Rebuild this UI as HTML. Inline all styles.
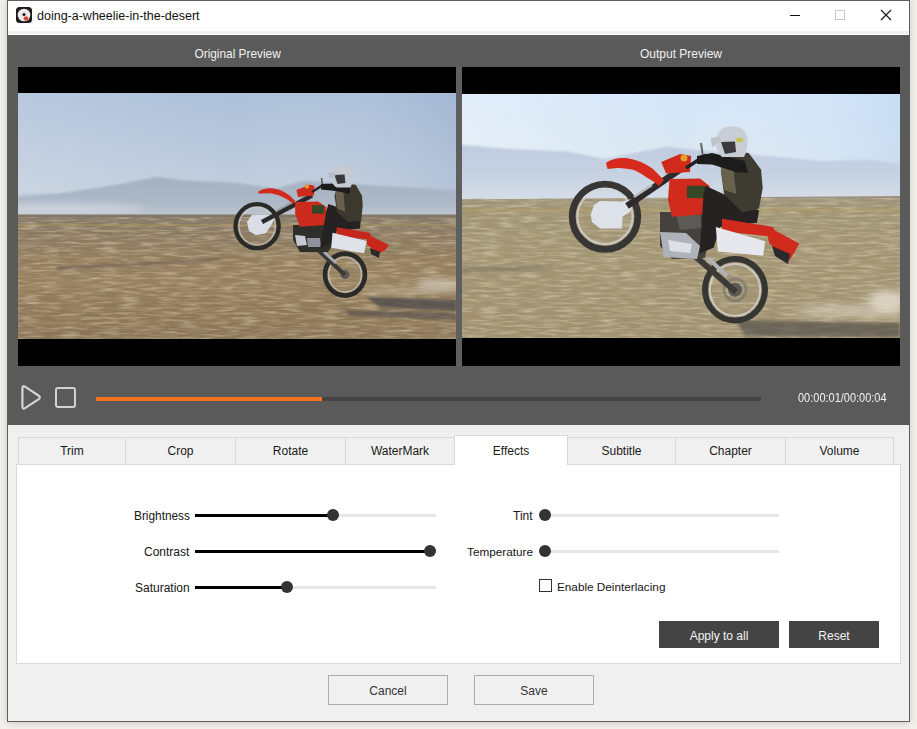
<!DOCTYPE html>
<html><head><meta charset="utf-8">
<style>
*{margin:0;padding:0;box-sizing:border-box}
html,body{width:917px;height:729px;overflow:hidden;background:#f1f0eb;font-family:"Liberation Sans",sans-serif}
.a{position:absolute}
.t{position:absolute;white-space:nowrap;line-height:1}
#win{left:7px;top:0;width:903px;height:722px;border:1px solid #5f5f5f;background:#f0f0f0;box-shadow:0 1px 7px rgba(0,0,0,0.16)}
#title{left:8px;top:1px;width:901px;height:34px;background:#fff}
#title .strip{left:0;top:30px;width:901px;height:3px;background:#efefef}
#dark{left:8px;top:35px;width:901px;height:390px;background:#5a5a5a}
.blk{background:#000}
.tab{position:absolute;top:437px;height:27px;background:#f0f0f0;border:1px solid #d9d9d9;border-bottom:none;font-size:12px;color:#1a1a1a;text-align:center;line-height:27px}
#panel{left:16px;top:464px;width:885px;height:200px;background:#fff;border:1px solid #d9d9d9}
.lbl{position:absolute;font-size:12px;color:#161616;line-height:1;white-space:nowrap}
.trk{position:absolute;height:3px;background:#e6e6e6}
.fill{position:absolute;height:3px;background:#000}
.knob{position:absolute;width:12px;height:12px;border-radius:50%;background:#333}
.dbtn{position:absolute;background:#444;color:#f4f4f4;font-size:12px;text-align:center;line-height:31px}
.lbtn{position:absolute;background:#f0f0f0;border:1px solid #adadad;color:#333;font-size:12px;text-align:center;line-height:31px}
</style></head><body>
<div id="win" class="a"></div>
<div id="title" class="a"><div class="a strip"></div></div>
<!-- app icon -->
<svg class="a" style="left:16px;top:7px" width="16" height="16" viewBox="0 0 16 16"><rect x="0" y="0" width="16" height="16" rx="3.5" fill="#1e1c1c"/><circle cx="8" cy="8" r="6.3" fill="#ebebec"/><ellipse cx="10.2" cy="11" rx="3" ry="2.6" fill="#f0c8b8" opacity="0.8"/><circle cx="10" cy="11.6" r="2.1" fill="#d8402a"/><circle cx="8" cy="7.4" r="1.5" fill="#151515"/></svg>
<div class="t" style="left:37px;top:10px;font-size:12.5px;color:#111">doing-a-wheelie-in-the-desert</div>
<!-- window controls -->
<div class="a" style="left:790px;top:15px;width:10px;height:1px;background:#111"></div>
<div class="a" style="left:835px;top:10px;width:10px;height:10px;border:1px solid #c8c8c8"></div>
<svg class="a" style="left:880px;top:9px" width="12" height="12" viewBox="0 0 12 12"><path d="M1 1L11 11M11 1L1 11" stroke="#111" stroke-width="1.1"/></svg>

<div id="dark" class="a"></div>
<div class="t" style="left:194.5px;top:48.6px;font-size:11.85px;color:#f0f0f0">Original Preview</div>
<div class="t" style="left:640px;top:48px;font-size:12px;color:#f0f0f0">Output Preview</div>
<div class="a blk" style="left:18px;top:67px;width:438px;height:299px"></div>
<div class="a blk" style="left:462px;top:67px;width:438px;height:299px"></div>
<div class="a" style="left:456px;top:67px;width:6px;height:299px;background:#5f5f5f"></div>
<svg class="a" style="left:18px;top:93px" width="438" height="246" viewBox="18 93 438 246">
<defs>
<linearGradient id="skyL" x1="0" y1="0" x2="0" y2="1"><stop offset="0" stop-color="#acc0d9"/><stop offset="0.7" stop-color="#bfccdc"/><stop offset="1" stop-color="#c8d1dc"/></linearGradient>
<linearGradient id="skyLh" x1="0" y1="0" x2="1" y2="0"><stop offset="0" stop-color="#ffffff" stop-opacity="0.14"/><stop offset="0.5" stop-color="#ffffff" stop-opacity="0"/><stop offset="1" stop-color="#7d98c0" stop-opacity="0.2"/></linearGradient>
<linearGradient id="mtnL" x1="0" y1="0" x2="0" y2="1"><stop offset="0" stop-color="#a5b1c2"/><stop offset="0.6" stop-color="#adb8c7"/><stop offset="1" stop-color="#c0c7d0"/></linearGradient>
<linearGradient id="gndL" x1="0" y1="0" x2="0" y2="1"><stop offset="0" stop-color="#80776a"/><stop offset="0.07" stop-color="#877965"/><stop offset="0.35" stop-color="#917c5d"/><stop offset="0.55" stop-color="#95805e"/><stop offset="0.75" stop-color="#8d7857"/><stop offset="1" stop-color="#897458"/></linearGradient>
<filter id="grainL" x="0" y="0" width="100%" height="100%">
<feTurbulence type="fractalNoise" baseFrequency="0.05 0.4" numOctaves="2" seed="7"/>
<feColorMatrix type="matrix" values="0 0 0 0 0.36  0 0 0 0 0.27  0 0 0 0 0.16  2.0 0 0 0 -0.82"/>
</filter>
<filter id="grainL2" x="0" y="0" width="100%" height="100%">
<feTurbulence type="fractalNoise" baseFrequency="0.05 0.4" numOctaves="2" seed="19"/>
<feColorMatrix type="matrix" values="0 0 0 0 0.74  0 0 0 0 0.64  0 0 0 0 0.46  1.8 0 0 0 -0.8"/>
</filter>
<filter id="soft" x="-10%" y="-10%" width="120%" height="120%"><feGaussianBlur stdDeviation="0.6"/></filter>
<filter id="blur3" x="-50%" y="-50%" width="200%" height="200%"><feGaussianBlur stdDeviation="3"/></filter>
<filter id="mblur" x="-5%" y="-20%" width="110%" height="140%"><feGaussianBlur stdDeviation="1.2"/></filter>
<filter id="blur1" x="-20%" y="-50%" width="140%" height="200%"><feGaussianBlur stdDeviation="1.3"/></filter>
</defs>
<rect x="18" y="93" width="438" height="122" fill="url(#skyL)"/>
<rect x="18" y="93" width="438" height="100" fill="url(#skyLh)"/>
<path d="M10 197 L54 194 L90 189 L126 183 L157 177 L186 180.6 L238 183 L276 188.5 L304 181 L340 183 L381 186 L420 188 L466 191 L466 218 L10 218 Z" fill="url(#mtnL)" filter="url(#mblur)"/>
<ellipse cx="50" cy="209" rx="95" ry="6" fill="#dfe3e8" opacity="0.5" filter="url(#blur3)"/>
<rect x="18" y="214.5" width="438" height="124.5" fill="url(#gndL)"/>
<rect x="18" y="217" width="438" height="122" filter="url(#grainL)" opacity="0.9"/>
<rect x="18" y="217" width="438" height="122" filter="url(#grainL2)" opacity="0.7"/>
<rect x="18" y="224" width="438" height="2" fill="#a8915c" opacity="0.5"/>
<path d="M56 267 Q140 263 220 257.5 L220 260 Q140 266 56 270 Z" fill="#544a4c" opacity="0.4" filter="url(#blur1)"/>
<path d="M366 297 L456 300 L456 311 L380 307 Z" fill="#4c4a4e" opacity="0.75" filter="url(#blur1)"/>
<path d="M346 310 L456 313 L456 320 L350 316 Z" fill="#524e4e" opacity="0.6" filter="url(#blur1)"/>
<ellipse cx="440" cy="285" rx="24" ry="7" fill="#d8cfc0" opacity="0.65" filter="url(#blur3)"/>
<ellipse cx="400" cy="291" rx="40" ry="3.5" fill="#cbbfa8" opacity="0.5" filter="url(#blur3)"/>
<g filter="url(#soft)">
<!-- front wheel -->
<ellipse cx="257.1" cy="226.2" rx="21.6" ry="22" fill="none" stroke="#2a2928" stroke-width="4.3"/>
<ellipse cx="257.1" cy="226.2" rx="18.2" ry="18.6" fill="none" stroke="#c9cbcc" stroke-width="1.3" opacity="0.75"/>
<path d="M252 214.8 L266 214.6 L276 215.5 L272 224 L266 233 L256 235.2 L249 231 L247 222 Z" fill="#d9dde5"/>
<!-- fork -->
<path d="M262 222 L312 195.6" stroke="#2c2b2a" stroke-width="4.5"/>
<path d="M276 211 L294 201" stroke="#9a9ca2" stroke-width="2"/>
<!-- rear wheel -->
<ellipse cx="345" cy="274.6" rx="20" ry="21" fill="none" stroke="#2a2928" stroke-width="4.6"/>
<ellipse cx="345" cy="274.6" rx="16.4" ry="17.3" fill="none" stroke="#c9cbcc" stroke-width="1.3" opacity="0.75"/>
<circle cx="345" cy="274.6" r="4.5" fill="#5a5856"/>
<path d="M318 250 L345 275" stroke="#3a3937" stroke-width="4"/>
<path d="M324 252 L336 263" stroke="#a9abb0" stroke-width="3"/>
<!-- front fender -->
<path d="M258 192 Q264 187.5 274 188.4 Q286 190 295.2 201 L292.8 203.4 Q284 196 272 193.5 Q264 193 259.2 193.8 Z" fill="#d02a1c"/>
<!-- engine -->
<path d="M293 225 L330 225 L336 240 L328 252 L300 252 L293 240 Z" fill="#2f2d2b"/>
<path d="M295 235 L305 236 L307 245 L297 246 Z" fill="#c6c9cf"/>
<path d="M307 238 L320 238 L321 247 L308 247 Z" fill="#8e939b"/>
<!-- shroud / tank -->
<path d="M295.2 202 L318 201.6 L326.4 207 L326.4 225 L300 226.8 L295.2 214 Z" fill="#cb291e"/>
<path d="M312 205.2 L324 205.2 L324 213.6 L312 213.6 Z" fill="#344726"/>
<!-- number plate -->
<path d="M296.4 190 L310 184.8 L314.4 186 L314 195.6 L298 197 Z" fill="#cc2a1f"/>
<circle cx="307" cy="186.5" r="2.2" fill="#e2962c"/>
<!-- handlebar -->
<path d="M312 192 L323 185" stroke="#242424" stroke-width="2.5"/>
<path d="M321.5 178 L322.5 186" stroke="#555" stroke-width="1.5"/>
<!-- pants -->
<path d="M328.4 204 L361.3 214.9 L360 228.6 L336.6 231.3 L332.5 243.7 L320.2 247.8 L323 231.3 L326 212 Z" fill="#252423"/>
<!-- jacket -->
<path d="M338 183 L355.8 184.7 L362 195.7 L362.7 205.3 L361.3 220.4 L348 222 L337 212 L334.5 196 Z" fill="#3d392f"/>
<path d="M335.3 190 L343 187 L345 212 L337 208 Z" fill="#6e6852" opacity="0.85"/>
<path d="M321 184 L335 183.5 L350 187 L350 194 L336 191 L321 189.5 Z" fill="#1e1d1b"/>
<!-- helmet -->
<path d="M331.2 178 Q332 166 342.1 165.5 Q353 166 353.1 176 Q352.5 184 350.4 187.4 L336.6 187.4 Q331 184 331.2 178 Z" fill="#c5c9d1"/>
<path d="M334.5 175 L344.5 174.5 L345.5 183 L337.5 184 Z" fill="#38383c"/>
<path d="M328.4 173 L335 172 L335.3 176 L329.5 178.5 Z" fill="#b8bcc4"/>
<!-- seat -->
<path d="M336.6 227.2 L369.6 232.7 L372.3 239.6 L336.6 236.8 Z" fill="#c7281e"/>
<!-- side panel -->
<path d="M332.5 232.7 L366.8 240.9 L364 253.3 L331.2 247.8 Z" fill="#dfe2e8"/>
<!-- rear fender -->
<path d="M366.8 234 L388.8 245 L386 249.2 L377.8 254.6 L366.8 243.7 Z" fill="#c9281e"/>
<path d="M370 248 L380 252 L379 258 L371 254 Z" fill="#2a2a2a"/>
</g>
</svg>

<svg class="a" style="left:462px;top:94px" width="438" height="244" viewBox="462 94 438 244">
<defs>
<linearGradient id="skyR" x1="0" y1="0" x2="0" y2="1"><stop offset="0" stop-color="#d5e6f8"/><stop offset="0.5" stop-color="#d9e7f3"/><stop offset="1" stop-color="#dde8f0"/></linearGradient>
<linearGradient id="skyRh" x1="0" y1="0" x2="1" y2="0"><stop offset="0" stop-color="#ffffff" stop-opacity="0.3"/><stop offset="0.5" stop-color="#ffffff" stop-opacity="0"/><stop offset="1" stop-color="#a8c6ec" stop-opacity="0.3"/></linearGradient>
<linearGradient id="mtnR" x1="0" y1="0" x2="0" y2="1"><stop offset="0" stop-color="#bfcce0"/><stop offset="0.55" stop-color="#c7d2e2"/><stop offset="1" stop-color="#d6dee8"/></linearGradient>
<linearGradient id="gndR" x1="0" y1="0" x2="0" y2="1"><stop offset="0" stop-color="#9c927e"/><stop offset="0.08" stop-color="#a09474"/><stop offset="0.4" stop-color="#a29472"/><stop offset="1" stop-color="#9f8f6e"/></linearGradient>
<filter id="grainR" x="0" y="0" width="100%" height="100%">
<feTurbulence type="fractalNoise" baseFrequency="0.05 0.4" numOctaves="2" seed="5"/>
<feColorMatrix type="matrix" values="0 0 0 0 0.42  0 0 0 0 0.37  0 0 0 0 0.26  1.8 0 0 0 -0.76"/>
</filter>
<filter id="grainR2" x="0" y="0" width="100%" height="100%">
<feTurbulence type="fractalNoise" baseFrequency="0.05 0.4" numOctaves="2" seed="23"/>
<feColorMatrix type="matrix" values="0 0 0 0 0.78  0 0 0 0 0.72  0 0 0 0 0.52  1.8 0 0 0 -0.8"/>
</filter>
<filter id="softR" x="-10%" y="-10%" width="120%" height="120%"><feGaussianBlur stdDeviation="0.7"/></filter>
<filter id="blurR" x="-50%" y="-50%" width="200%" height="200%"><feGaussianBlur stdDeviation="4"/></filter>
<filter id="mblurR" x="-5%" y="-20%" width="110%" height="140%"><feGaussianBlur stdDeviation="1.3"/></filter>
<filter id="blurR1" x="-20%" y="-50%" width="140%" height="200%"><feGaussianBlur stdDeviation="1.6"/></filter>
</defs>
<rect x="462" y="94" width="438" height="106" fill="url(#skyR)"/>
<rect x="462" y="94" width="438" height="70" fill="url(#skyRh)"/>
<path d="M452 144 L510 149 L567 151.5 L605 158.7 L667 146.7 L710 151.5 L772 156.3 L820 161 L868 159.7 L910 164 L910 202 L452 202 Z" fill="url(#mtnR)" filter="url(#mblurR)"/>
<path d="M462 199.3 L900 196 L900 338 L462 338 Z" fill="url(#gndR)"/>
<rect x="462" y="198" width="438" height="140" filter="url(#grainR)" opacity="0.85"/>
<rect x="462" y="198" width="438" height="140" filter="url(#grainR2)" opacity="0.65"/>
<rect x="462" y="209" width="438" height="2" fill="#b9a252" opacity="0.45"/>
<path d="M462 268 Q510 267 553 266 L553 269 Q510 271 462 272 Z" fill="#5e5650" opacity="0.4" filter="url(#blurR1)"/>
<path d="M735 320 L900 323 L900 337 L745 336 Z" fill="#57524e" opacity="0.7" filter="url(#blurR1)"/>
<ellipse cx="850" cy="311" rx="55" ry="6" fill="#d9d0bf" opacity="0.7" filter="url(#blurR)"/>
<ellipse cx="888" cy="301" rx="20" ry="11" fill="#e2dacb" opacity="0.85" filter="url(#blurR)"/>
<g filter="url(#softR)">
<!-- front wheel -->
<ellipse cx="605" cy="216.7" rx="32.8" ry="32.6" fill="none" stroke="#383634" stroke-width="6.8"/>
<ellipse cx="605" cy="216.7" rx="27.6" ry="27.4" fill="none" stroke="#d4d6d6" stroke-width="2" opacity="0.75"/>
<path d="M600 201 L622 201.5 L634.4 198.3 L630 212 L622.5 216.4 L622 228.4 L600 228.4 L592 222 L590.7 214.8 L594 205 Z" fill="#dde2ea"/>
<!-- fork -->
<path d="M627 206 L688 164" stroke="#2d2c2b" stroke-width="6.5"/>
<path d="M634 197 L652 185" stroke="#b8bbc0" stroke-width="2.2"/>
<!-- rear wheel -->
<ellipse cx="735" cy="289.8" rx="30" ry="30.7" fill="none" stroke="#363432" stroke-width="6"/>
<ellipse cx="735" cy="289.8" rx="25.2" ry="25.9" fill="none" stroke="#d4d6d6" stroke-width="2" opacity="0.75"/>
<circle cx="735" cy="289.8" r="11" fill="none" stroke="#77736c" stroke-width="3" opacity="0.6"/>
<circle cx="735" cy="289.8" r="7" fill="#5c5a57"/>
<path d="M695 256 L736 292" stroke="#3b3a38" stroke-width="6"/>
<path d="M708 258 L727 276" stroke="#b0b2b6" stroke-width="4"/>
<!-- front fender -->
<path d="M606 163 Q613 157.5 626 158 Q641 160 653 169 L664 180 L659 186 Q652 180 646 177 Q638 171 632 169.5 Q622 167.5 617 168 L607.5 169 Z" fill="#d82a1a"/>
<!-- engine -->
<path d="M660 212 L705 212 L710 232 L705 258 L672 259 L660 246 Z" fill="#45423e"/>
<path d="M660 232 L686 233 L700 246 L697 259 L664 257 Z" fill="#aeb2b9"/>
<path d="M668 240 L692 244 L690 253 L670 251 Z" fill="#dde0e5"/>
<path d="M676 214 L700 214 L702 228 L680 230 Z" fill="#5d5a56"/>
<!-- shroud -->
<path d="M669.5 179 L700 178.6 L709.6 186 L709.6 214 L672 216.7 L668 200 Z" fill="#d02b1c"/>
<path d="M687 185.8 L705.5 185.8 L705.5 198.1 L687 198.1 Z" fill="#35482a"/>
<!-- number plate -->
<path d="M661.3 162 L680 154 L691.1 156 L690 172 L666 173.5 Z" fill="#cf2a1c"/>
<circle cx="684" cy="158" r="3.5" fill="#e89a2a"/>
<!-- handlebar / mirror -->
<path d="M686 168 L706 155" stroke="#232323" stroke-width="3.5"/>
<path d="M701 143 L703 157" stroke="#666" stroke-width="2"/>
<!-- pants -->
<path d="M705.5 185.8 L759 210.5 L757 222.8 L720 227 L713.8 247.5 L699.4 253.7 L701.4 227 L703.5 194 Z" fill="#252423"/>
<!-- jacket -->
<path d="M728.1 150.8 L748.7 152.9 L761 169.4 L762.7 187.9 L759 208.4 L742.5 212.5 L724 194 L721 171.4 Z" fill="#3d3a31"/>
<path d="M720 164 L732 159 L736.4 194 L724 190 Z" fill="#6f6a54" opacity="0.85"/>
<path d="M697 156 L712 153 L745 161 L748 173 L736 172 L712 164.5 L697 164 Z" fill="#1f1e1c"/>
<!-- helmet -->
<path d="M715.8 142 Q717 126.5 732.3 126.2 Q747.5 127 747.7 141 Q747 152 744 157 L722 157 Q715.5 151 715.8 142 Z" fill="#c9ced6"/>
<path d="M721 142 L735 141.5 L736 152 L725 154 Z" fill="#3a3a3e"/>
<path d="M710.7 138 L720 136.5 L721 141 L712 147.8 Z" fill="#c0c4cc"/>
<path d="M736.4 137.5 L743.6 138.5 L742 142.6 L736 142 Z" fill="#c8c45a"/>
<!-- seat -->
<path d="M722 218.7 L773.4 227 L775.5 237.2 L722 231 Z" fill="#cf2a1d"/>
<!-- side panel -->
<path d="M715.8 227 L765.2 241.3 L763.1 255.7 L717.9 251.6 Z" fill="#e6e8ed"/>
<!-- rear fender -->
<path d="M765.2 224.9 L799.1 243.4 L796 249.6 L789.8 259.8 L769.3 243.4 Z" fill="#d02a1c"/>
<path d="M772 246 L790 254 L788 264 L775 256 Z" fill="#2a2a2a"/>
</g>
</svg>

<!-- controls -->
<svg class="a" style="left:18px;top:382px" width="28" height="32" viewBox="0 0 28 32"><path d="M4.4 6.6 Q4.4 2.9 7.4 4.9 L20.4 13.5 Q23.2 15.4 20.4 17.3 L7.4 25.9 Q4.4 27.9 4.4 24.2 Z" fill="none" stroke="#d4d4d4" stroke-width="2.2" stroke-linejoin="round"/></svg>
<div class="a" style="left:55px;top:387px;width:21px;height:21px;border:2px solid #d2d2d2;border-radius:3px"></div>
<div class="a" style="left:96px;top:397px;width:665px;height:4px;background:#434343"></div>
<div class="a" style="left:96px;top:397px;width:226px;height:4px;background:#f47321"></div>
<div class="t" style="left:798px;top:391px;font-size:13px;color:#f2f2f2;transform:scaleX(0.845);transform-origin:0 0">00:00:01/00:00:04</div>

<!-- tabs -->
<div id="panel" class="a"></div>
<div class="tab" style="left:18px;width:108px">Trim</div>
<div class="tab" style="left:125px;width:111px">Crop</div>
<div class="tab" style="left:235px;width:111px">Rotate</div>
<div class="tab" style="left:345px;width:110px">WaterMark</div>
<div class="tab" style="left:567px;width:109px">Subtitle</div>
<div class="tab" style="left:675px;width:111px">Chapter</div>
<div class="tab" style="left:785px;width:109px">Volume</div>
<div class="tab" style="left:454px;top:435px;width:114px;height:30px;background:#fff;line-height:30px">Effects</div>

<!-- sliders -->
<div class="lbl" style="left:134px;top:511px;font-size:11.85px">Brightness</div>
<div class="trk" style="left:195px;top:514px;width:241px"></div>
<div class="fill" style="left:195px;top:514px;width:138px"></div>
<div class="knob" style="left:327px;top:509px"></div>

<div class="lbl" style="left:144px;top:546px">Contrast</div>
<div class="trk" style="left:195px;top:550px;width:241px"></div>
<div class="fill" style="left:195px;top:550px;width:235px"></div>
<div class="knob" style="left:424px;top:545px"></div>

<div class="lbl" style="left:135px;top:582px">Saturation</div>
<div class="trk" style="left:195px;top:586px;width:241px"></div>
<div class="fill" style="left:195px;top:586px;width:92px"></div>
<div class="knob" style="left:281px;top:581px"></div>

<div class="lbl" style="left:513px;top:510px">Tint</div>
<div class="trk" style="left:545px;top:514px;width:234px"></div>
<div class="knob" style="left:539px;top:509px"></div>

<div class="lbl" style="left:467px;top:545.5px;font-size:11.75px">Temperature</div>
<div class="trk" style="left:545px;top:550px;width:234px"></div>
<div class="knob" style="left:539px;top:545px"></div>

<div class="a" style="left:539px;top:579px;width:13px;height:13px;border:1px solid #333;background:#fff"></div>
<div class="lbl" style="left:557px;top:581px;font-size:11.75px">Enable Deinterlacing</div>

<div class="dbtn" style="left:659px;top:621px;width:120px;height:27px">Apply to all</div>
<div class="dbtn" style="left:789px;top:621px;width:90px;height:27px">Reset</div>

<div class="lbtn" style="left:328px;top:675px;width:120px;height:30px">Cancel</div>
<div class="lbtn" style="left:474px;top:675px;width:120px;height:30px">Save</div>
</body></html>
